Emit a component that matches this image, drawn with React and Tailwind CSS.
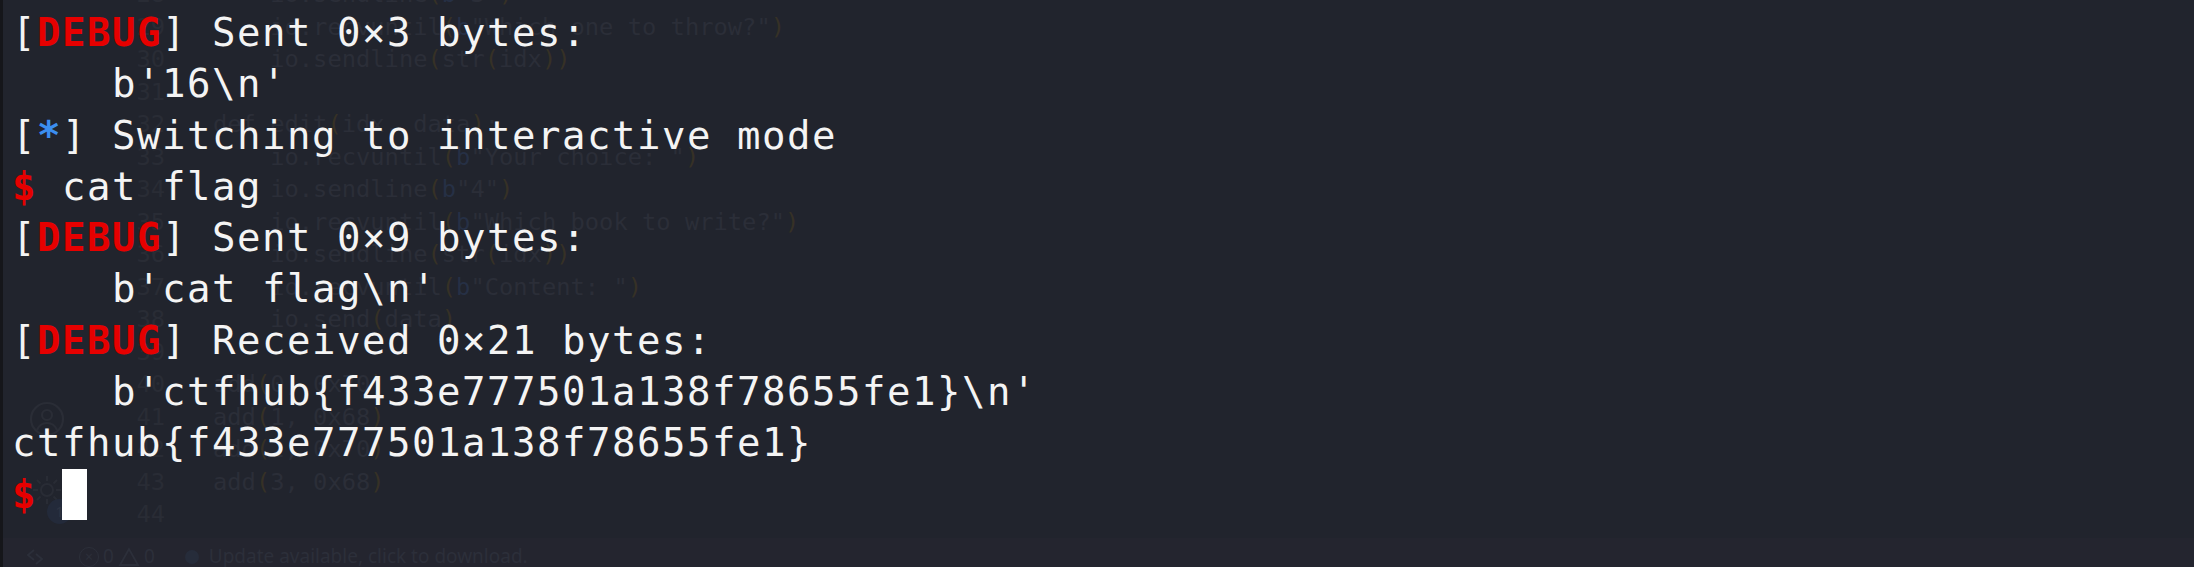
import React from "react";

const ghostLines = [
  { n: 28, parts: [["    io.", "c"], ["sendline", "c"], ["(", "p"], ["b", "b"], ['"3"', "c"], [")", "p"]] },
  { n: 29, parts: [["    io.recvuntil", "c"], ["(", "p"], ["b", "b"], ['"Which one to throw?"', "c"], [")", "p"]] },
  { n: 30, parts: [["    io.sendline", "c"], ["(", "p"], ["str", "c"], ["(", "p"], ["idx", "c"], ["))", "p"]] },
  { n: 31, parts: [] },
  { n: 32, parts: [["def edit", "c"], ["(", "p"], ["idx, data", "c"], [")", "p"], [":", "c"]] },
  { n: 33, parts: [["    io.recvuntil", "c"], ["(", "p"], ["b", "b"], ['"Your choice: "', "c"], [")", "p"]] },
  { n: 34, parts: [["    io.sendline", "c"], ["(", "p"], ["b", "b"], ['"4"', "c"], [")", "p"]] },
  { n: 35, parts: [["    io.recvuntil", "c"], ["(", "p"], ["b", "b"], ['"Which book to write?"', "c"], [")", "p"]] },
  { n: 36, parts: [["    io.sendline", "c"], ["(", "p"], ["str", "c"], ["(", "p"], ["idx", "c"], ["))", "p"]] },
  { n: 37, parts: [["    io.recvuntil", "c"], ["(", "p"], ["b", "b"], ['"Content: "', "c"], [")", "p"]] },
  { n: 38, parts: [["    io.send", "c"], ["(", "p"], ["data", "c"], [")", "p"]] },
  { n: 39, parts: [] },
  { n: 40, parts: [["add", "c"], ["(", "p"], ["0, 0x70", "c"], [")", "p"]] },
  { n: 41, parts: [["add", "c"], ["(", "p"], ["1, 0x68", "c"], [")", "p"]] },
  { n: 42, parts: [["add", "c"], ["(", "p"], ["2, 0x70", "c"], [")", "p"]] },
  { n: 43, parts: [["add", "c"], ["(", "p"], ["3, 0x68", "c"], [")", "p"]] },
  { n: 44, parts: [] },
];

const partColor = {
  c: "text-[#2b2e38]",
  p: "text-[#363126]",
  b: "text-[#263045]",
};

function Ghost() {
  return (
    <div className="absolute inset-0 flex flex-col pointer-events-none">
      <div className="relative flex-1 overflow-hidden">
        <div className="mt-[-22px] flex flex-col font-['DejaVu_Sans_Mono',monospace] text-[23.75px] whitespace-pre">
          {ghostLines.map((l) => (
            <div key={l.n} className="flex h-[32.5px] leading-[32.5px]">
              <div className="w-[162px] text-right text-[#292c35]">{l.n}</div>
              <div className="ml-[48px]">
                {l.parts.map(([t, k], i) => (
                  <span key={i} className={partColor[k]}>
                    {t}
                  </span>
                ))}
              </div>
            </div>
          ))}
        </div>
        {/* account icon */}
        <svg className="absolute left-[26px] top-[401px]" width="36" height="36" viewBox="0 0 36 36" fill="none" stroke="#2a2d36" strokeWidth="2.2">
          <circle cx="18" cy="18" r="16" />
          <circle cx="18" cy="14" r="5" />
          <path d="M8 29c2-5 6-7 10-7s8 2 10 7" />
        </svg>
        {/* gear with badge */}
        <svg className="absolute left-[24px] top-[470px]" width="40" height="40" viewBox="0 0 40 40" fill="none" stroke="#292c35" strokeWidth="2">
          <circle cx="20" cy="20" r="6" />
          <path d="M20 6v5M20 29v5M6 20h5M29 20h5M10 10l3.5 3.5M26.5 26.5L30 30M10 30l3.5-3.5M26.5 13.5L30 10" />
        </svg>
        <div className="absolute left-[44px] top-[499px] w-[25px] h-[25px] rounded-full bg-[#232a3a] flex items-center justify-center text-[15px] text-[#2e3443] font-['Noto_Sans',sans-serif]">
          1
        </div>
      </div>
      <div className="h-[29px] bg-[#24252f] flex items-center font-['Noto_Sans',sans-serif] text-[19px] text-[#2c2f3a] leading-none pt-[8px]">
        <svg className="ml-[22px]" width="20" height="18" viewBox="0 0 20 18" fill="none" stroke="#2c2f3a" strokeWidth="1.8">
          <path d="M9 2L3 7l6 5M11 6l6 5-6 5" />
        </svg>
        <div className="ml-[34px] flex items-center gap-[4px]">
          <span className="inline-flex w-[20px] h-[20px] rounded-full border-[1.8px] border-[#2c2f3a] items-center justify-center text-[14px]">×</span>
          <span>0</span>
          <svg width="22" height="20" viewBox="0 0 22 20" fill="none" stroke="#2c2f3a" strokeWidth="1.8">
            <path d="M11 2L2 18h18z" />
          </svg>
          <span>0</span>
        </div>
        <span className="ml-[30px] w-[14px] h-[14px] rounded-full bg-[#262c3a]" />
        <span className="ml-[10px]">Update available, click to download.</span>
      </div>
    </div>
  );
}

const R = ({ children }) => <span className="font-bold text-[#e60000]">{children}</span>;

function Row({ children }) {
  return <div className="h-[51.3px] leading-[51.3px] whitespace-pre">{children}</div>;
}

export default function App() {
  return (
    <div className="relative w-[2194px] h-[567px] overflow-hidden bg-[#21242d] border-l-[3px] border-[#15161a]">
      <Ghost />
      <div className="relative pt-[7px] pl-[9px] font-['DejaVu_Sans_Mono',monospace] text-[39px] tracking-[1.52px] text-[#f4f4f4]">
        <Row>
          [<R>DEBUG</R>] Sent 0×3 bytes:
        </Row>
        <Row>{"    b'16\\n'"}</Row>
        <Row>
          [<span className="font-bold text-[#3b8ef0]">*</span>] Switching to interactive mode
        </Row>
        <Row>
          <R>$</R> cat flag
        </Row>
        <Row>
          [<R>DEBUG</R>] Sent 0×9 bytes:
        </Row>
        <Row>{"    b'cat flag\\n'"}</Row>
        <Row>
          [<R>DEBUG</R>] Received 0×21 bytes:
        </Row>
        <Row>{"    b'ctfhub{f433e777501a138f78655fe1}\\n'"}</Row>
        <Row>ctfhub{"{"}f433e777501a138f78655fe1{"}"}</Row>
        <Row>
          <R>$</R> <span className="inline-block w-[25px] h-[51px] bg-white align-top" />
        </Row>
      </div>
    </div>
  );
}
